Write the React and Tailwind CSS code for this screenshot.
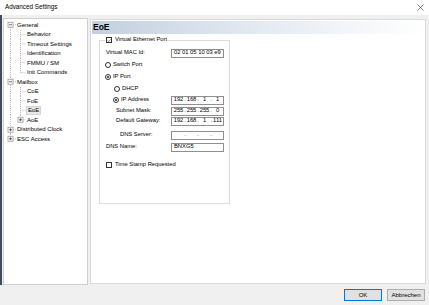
import React from 'react';

const treeRows = [
  { label: 'General', level: 0, box: '-', root: 'down' },
  { label: 'Behavior', level: 1, root: 'full', child: 'full' },
  { label: 'Timeout Settings', level: 1, root: 'full', child: 'full' },
  { label: 'Identification', level: 1, root: 'full', child: 'full' },
  { label: 'FMMU / SM', level: 1, root: 'full', child: 'full' },
  { label: 'Init Commands', level: 1, root: 'full', child: 'up' },
  { label: 'Mailbox', level: 0, box: '-', root: 'full' },
  { label: 'CoE', level: 1, root: 'full', child: 'full' },
  { label: 'FoE', level: 1, root: 'full', child: 'full' },
  { label: 'EoE', level: 1, root: 'full', child: 'full', selected: true },
  { label: 'AoE', level: 1, root: 'full', child: 'up', box: '+' },
  { label: 'Distributed Clock', level: 0, box: '+', root: 'full' },
  { label: 'ESC Access', level: 0, box: '+', root: 'up' },
];

function ExpandBox({ cx, cy, sign }) {
  return (
    <g>
      <rect x={cx - 2.5} y={cy - 2.5} width="5" height="5" fill="#fff" stroke="#9a9a9a" strokeWidth="0.8" />
      <line x1={cx - 1.5} y1={cy} x2={cx + 1.5} y2={cy} stroke="#333" strokeWidth="0.7" />
      {sign === '+' && <line x1={cx} y1={cy - 1.5} x2={cx} y2={cy + 1.5} stroke="#333" strokeWidth="0.7" />}
    </g>
  );
}

function TreeGlyph({ row }) {
  const h = 9.5;
  const m = 4.75;
  const w = row.level === 0 ? 13 : 23;
  const dot = { stroke: '#a0a0a0', strokeWidth: 0.7, strokeDasharray: '1 1' };
  const rx = 6.5;
  const cx = 16.5;
  return (
    <svg width={w} height={h} viewBox={`0 0 ${w} ${h}`} className="flex-none">
      {row.root === 'full' && <line x1={rx} y1="0" x2={rx} y2={h} {...dot} />}
      {row.root === 'down' && <line x1={rx} y1={m} x2={rx} y2={h} {...dot} />}
      {row.root === 'up' && <line x1={rx} y1="0" x2={rx} y2={m} {...dot} />}
      {row.level === 0 && <line x1="9" y1={m} x2="12" y2={m} {...dot} />}
      {row.level === 1 && (
        <>
          <line x1={cx} y1="0" x2={cx} y2={row.child === 'full' ? h : m} {...dot} />
          <line x1={cx} y1={m} x2="22" y2={m} {...dot} />
          {row.box && <ExpandBox cx={cx} cy={m} sign={row.box} />}
        </>
      )}
      {row.level === 0 && <ExpandBox cx={rx} cy={m} sign={row.box} />}
    </svg>
  );
}

function Radio({ checked }) {
  return (
    <span className="flex-none w-[6px] h-[6px] rounded-full border border-[#333] bg-white flex items-center justify-center">
      {checked && <span className="w-[2.5px] h-[2.5px] rounded-full bg-[#222]" />}
    </span>
  );
}

function Check({ checked }) {
  return (
    <span className="flex-none w-[6px] h-[6px] border border-[#333] bg-white flex items-center justify-center">
      {checked && (
        <svg width="5" height="5" viewBox="0 0 5 5">
          <path d="M0.8 2.6 L2 3.8 L4.3 1.1" fill="none" stroke="#222" strokeWidth="0.7" />
        </svg>
      )}
    </span>
  );
}

function IpField({ parts }) {
  return (
    <div className="w-[53px] h-[9px] border border-[#8f8f8f] bg-white flex items-center pl-[1px] text-[5.8px] leading-none">
      {parts.map((p, i) => (
        <React.Fragment key={i}>
          <span className="w-[11px] text-center">{p}</span>
          {i < 3 && <span className="w-[2px] text-center">.</span>}
        </React.Fragment>
      ))}
    </div>
  );
}

function TextField({ value }) {
  return (
    <div className="w-[53px] h-[9px] border border-[#8f8f8f] bg-white flex items-center pl-[2px] text-[5.8px] leading-none">
      {value}
    </div>
  );
}

export default function App() {
  return (
    <div
      className="w-[429px] h-[305px] flex flex-col bg-[#f0f0f0] text-black overflow-hidden"
      style={{ fontFamily: '"Liberation Sans", Arial, sans-serif' }}
    >
      <div className="h-[15px] flex-none bg-white flex items-center justify-between pl-[5px] pr-[5px]">
        <span className="text-[6.3px] leading-none">Advanced Settings</span>
        <svg width="7" height="7" viewBox="0 0 7 7">
          <path d="M0.5 0.5 L6.5 6.5 M6.5 0.5 L0.5 6.5" stroke="#333" strokeWidth="0.6" />
        </svg>
      </div>

      <div className="flex-1 flex border-l-2 border-[#3e4c5c] pl-[1px] pr-[3px]">
        <div className="mt-[3px] w-[85px] h-[267px] bg-white border border-[#cfcfcf] pt-[1px] text-[6px] leading-none">
          {treeRows.map((row) => (
            <div key={row.label} className="h-[9.5px] flex items-center">
              <TreeGlyph row={row} />
              <span
                className={
                  row.selected
                    ? 'px-[1px] -ml-[1px] h-[8.5px] flex items-center bg-[#e8e8e8] border border-[#d4d4d4]'
                    : 'whitespace-nowrap'
                }
              >
                {row.label}
              </span>
            </div>
          ))}
        </div>

        <div className="ml-[2px] mt-[4px] flex-1 h-[265px] bg-white border border-[#d9d9d9] p-[1px]">
          <div className="h-[13px] flex items-center pl-[1px] bg-linear-to-r from-[#c3cfdf] via-[#e4eaf2] to-white text-[8.5px] font-bold leading-none">
            EoE
          </div>

          <fieldset className="ml-[7px] mt-[2px] w-[131px] border border-[#dcdcdc] pb-[33px] text-[5.8px] leading-none">
            <legend className="ml-[5px] px-[1px] h-[8px] flex items-center gap-[3px]">
              <Check checked />
              <span>Virtual Ethernet Port</span>
            </legend>

            <div className="mt-[4px] h-[10px] flex items-center pl-[6px]">
              <span className="w-[65px]">Virtual MAC Id:</span>
              <TextField value="02 01 05 10 03 e9" />
            </div>

            <div className="mt-[2px] h-[10px] flex items-center pl-[5px] gap-[2px]">
              <Radio />
              <span>Switch Port</span>
            </div>

            <div className="mt-[2px] h-[10px] flex items-center pl-[5px] gap-[2px]">
              <Radio checked />
              <span>IP Port</span>
            </div>

            <div className="mt-[2px] h-[10px] flex items-center pl-[14px] gap-[2px]">
              <Radio />
              <span>DHCP</span>
            </div>

            <div className="mt-[1px] h-[10px] flex items-center pl-[13px]">
              <span className="w-[58px] flex items-center gap-[2px]">
                <Radio checked />
                <span>IP Address</span>
              </span>
              <IpField parts={['192', '168', '1', '1']} />
            </div>

            <div className="mt-[1px] h-[10px] flex items-center pl-[16px]">
              <span className="w-[55px]">Subnet Mask:</span>
              <IpField parts={['255', '255', '255', '0']} />
            </div>

            <div className="h-[10px] flex items-center pl-[16px]">
              <span className="w-[55px]">Default Gateway:</span>
              <IpField parts={['192', '168', '1', '111']} />
            </div>

            <div className="mt-[4px] h-[10px] flex items-center pl-[20px]">
              <span className="w-[51px]">DNS Server:</span>
              <IpField parts={['', '', '', '']} />
            </div>

            <div className="mt-[2px] h-[10px] flex items-center pl-[6px]">
              <span className="w-[65px]">DNS Name:</span>
              <TextField value="BNXG5" />
            </div>

            <div className="mt-[8px] h-[10px] flex items-center pl-[6px] gap-[3px]">
              <Check />
              <span>Time Stamp Requested</span>
            </div>
          </fieldset>
        </div>
      </div>

      <div className="h-[20px] flex-none flex justify-end items-start gap-[5px] pt-[4px] pr-[4px]">
        <button className="w-[38px] h-[12px] border border-[#0078d7] bg-[#e1e1e1] text-[6px] leading-none">
          OK
        </button>
        <button className="w-[38px] h-[12px] border border-[#adadad] bg-[#e1e1e1] text-[6px] leading-none">
          Abbrechen
        </button>
      </div>
    </div>
  );
}
